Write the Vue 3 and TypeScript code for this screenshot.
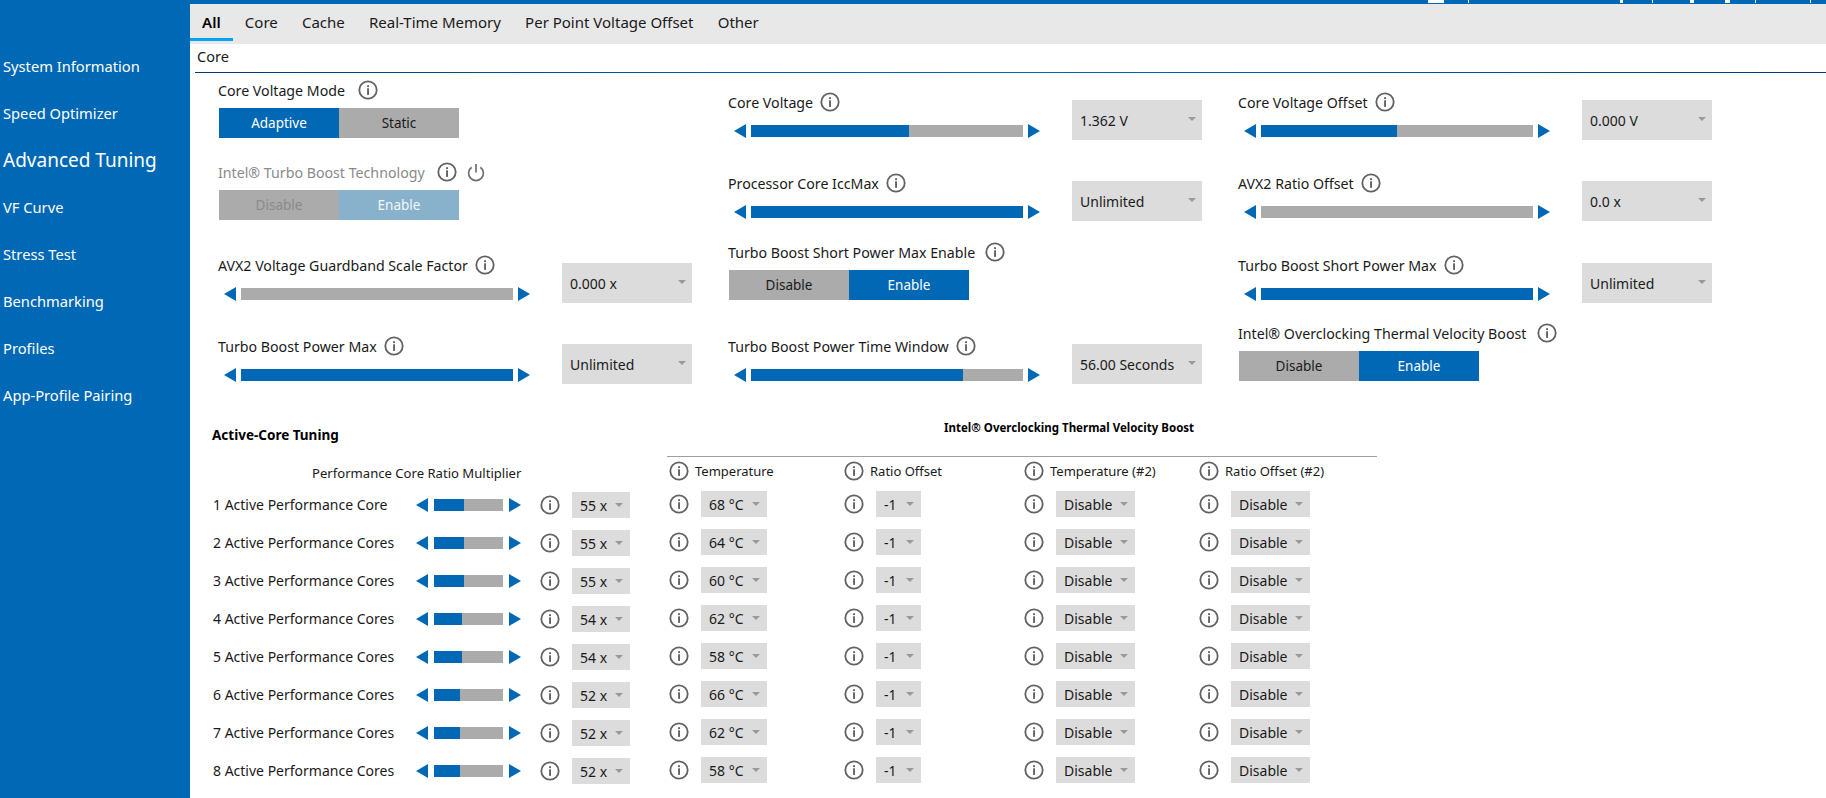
<script setup lang="ts">
interface Cell {
  kind: 'slider' | 'toggle'
  label: string
  top: number
  value?: string
  fill?: number
  on?: string
  off?: string
  dim?: boolean
  power?: boolean
  gap?: number
}

const navItems = [
  'System Information',
  'Speed Optimizer',
  'Advanced Tuning',
  'VF Curve',
  'Stress Test',
  'Benchmarking',
  'Profiles',
  'App-Profile Pairing'
]
const tabs = ['All', 'Core', 'Cache', 'Real-Time Memory', 'Per Point Voltage Offset', 'Other']

// bits of the window title that are cut off by the top edge
const titleTicks = [
  { x: 1428, w: 16 },
  { x: 1468, w: 1 },
  { x: 1620, w: 3 },
  { x: 1652, w: 1 },
  { x: 1690, w: 4 },
  { x: 1725, w: 5 },
  { x: 1755, w: 1 },
  { x: 1810, w: 1 }
]

const columns: Cell[][] = [
  [
    { kind: 'toggle', label: 'Core Voltage Mode', top: 7, on: 'Adaptive', off: 'Static', gap: 13 },
    { kind: 'toggle', label: 'Intel® Turbo Boost Technology', top: 24, on: 'Disable', off: 'Enable', dim: true, power: true, gap: 12 },
    { kind: 'slider', label: 'AVX2 Voltage Guardband Scale Factor', top: 35, value: '0.000 x', fill: 0 },
    { kind: 'slider', label: 'Turbo Boost Power Max', top: 33, value: 'Unlimited', fill: 100 }
  ],
  [
    { kind: 'slider', label: 'Core Voltage', top: 19, value: '1.362 V', fill: 58 },
    { kind: 'slider', label: 'Processor Core IccMax', top: 33, value: 'Unlimited', fill: 100 },
    { kind: 'toggle', label: 'Turbo Boost Short Power Max Enable', top: 21, off: 'Disable', on: 'Enable', gap: 10 },
    { kind: 'slider', label: 'Turbo Boost Power Time Window', top: 36, value: '56.00 Seconds', fill: 78 }
  ],
  [
    { kind: 'slider', label: 'Core Voltage Offset', top: 19, value: '0.000 V', fill: 50 },
    { kind: 'slider', label: 'AVX2 Ratio Offset', top: 33, value: '0.0 x', fill: 0 },
    { kind: 'slider', label: 'Turbo Boost Short Power Max', top: 34, value: 'Unlimited', fill: 100 },
    { kind: 'toggle', label: 'Intel® Overclocking Thermal Velocity Boost', top: 20, off: 'Disable', on: 'Enable', gap: 11 }
  ]
]

const coreRows = [
  { name: '1 Active Performance Core', ratio: '55 x', fill: 43, temp: '68 °C' },
  { name: '2 Active Performance Cores', ratio: '55 x', fill: 43, temp: '64 °C' },
  { name: '3 Active Performance Cores', ratio: '55 x', fill: 43, temp: '60 °C' },
  { name: '4 Active Performance Cores', ratio: '54 x', fill: 41, temp: '62 °C' },
  { name: '5 Active Performance Cores', ratio: '54 x', fill: 41, temp: '58 °C' },
  { name: '6 Active Performance Cores', ratio: '52 x', fill: 38, temp: '66 °C' },
  { name: '7 Active Performance Cores', ratio: '52 x', fill: 38, temp: '62 °C' },
  { name: '8 Active Performance Cores', ratio: '52 x', fill: 38, temp: '58 °C' }
]
const tvbHeads = ['Temperature', 'Ratio Offset', 'Temperature (#2)', 'Ratio Offset (#2)']
</script>

<template>
  <div class="app">
    <svg class="sprite" width="0" height="0">
      <symbol id="info" viewBox="0 0 20 20">
        <circle cx="10" cy="10" r="8.7" fill="none" stroke="#626262" stroke-width="1.8" />
        <rect x="9.1" y="5.2" width="1.9" height="1.9" fill="#626262" />
        <rect x="9.1" y="8.3" width="1.9" height="6.6" fill="#626262" />
      </symbol>
    </svg>

    <div class="topbar">
      <i v-for="t in titleTicks" :key="t.x" :style="{ left: t.x + 'px', width: t.w + 'px' }"></i>
    </div>

    <div class="body">
      <nav class="sidebar">
        <a v-for="item in navItems" :key="item" :class="{ current: item === 'Advanced Tuning' }">{{ item }}</a>
      </nav>

      <main class="main">
        <div class="tabs">
          <span v-for="tab in tabs" :key="tab" class="tab" :class="{ active: tab === 'All' }">{{ tab }}</span>
        </div>
        <div class="section-head">Core</div>

        <div class="cols">
          <div v-for="(col, i) in columns" :key="i" class="col">
            <div
              v-for="cell in col"
              :key="cell.label"
              class="cell"
              :class="{ dim: cell.dim }"
              :style="{ marginTop: cell.top + 'px' }"
            >
              <div class="cell-main">
                <div class="label" :style="{ gap: (cell.gap ?? 7) + 'px' }">
                  <span>{{ cell.label }}</span>
                  <svg class="info"><use href="#info" /></svg>
                  <svg v-if="cell.power" class="power" viewBox="0 0 20 20">
                    <path d="M5.6 5.2a7.4 7.4 0 1 0 8.8 0" fill="none" stroke="#707070" stroke-width="1.7" />
                    <path d="M10 2v8.4" fill="none" stroke="#707070" stroke-width="1.7" />
                  </svg>
                </div>
                <div v-if="cell.kind === 'slider'" class="slider">
                  <b class="arrow left"></b>
                  <div class="track"><div class="fill" :style="{ width: cell.fill + '%' }"></div></div>
                  <b class="arrow right"></b>
                </div>
                <div v-else class="toggle">
                  <template v-if="cell.on === 'Adaptive' || cell.dim">
                    <button class="seg" :class="{ selected: !cell.dim }">{{ cell.on }}</button>
                    <button class="seg" :class="{ selected: cell.dim }">{{ cell.off }}</button>
                  </template>
                  <template v-else>
                    <button class="seg">{{ cell.off }}</button>
                    <button class="seg selected">{{ cell.on }}</button>
                  </template>
                </div>
              </div>
              <div v-if="cell.kind === 'slider'" class="select big">
                <span>{{ cell.value }}</span><em class="caret"></em>
              </div>
            </div>
          </div>
        </div>

        <div class="tuning">
          <div class="active-core">
            <div class="tuning-title">Active-Core Tuning</div>
            <div class="ratio-head">Performance Core Ratio Multiplier</div>
            <div class="core-rows">
              <div v-for="row in coreRows" :key="row.name" class="core-row">
                <span class="core-name">{{ row.name }}</span>
                <div class="slider small">
                  <b class="arrow left"></b>
                  <div class="track"><div class="fill" :style="{ width: row.fill + '%' }"></div></div>
                  <b class="arrow right"></b>
                </div>
                <svg class="info core-info"><use href="#info" /></svg>
                <div class="select w58"><span>{{ row.ratio }}</span><em class="caret"></em></div>
              </div>
            </div>
          </div>

          <div class="tvb">
            <div class="tvb-title">Intel® Overclocking Thermal Velocity Boost</div>
            <div class="tvb-grid head">
              <template v-for="h in tvbHeads" :key="h">
                <svg class="info"><use href="#info" /></svg>
                <span class="head-text">{{ h }}</span>
              </template>
            </div>
            <div class="tvb-rows">
              <div v-for="row in coreRows" :key="row.name" class="tvb-grid">
                <svg class="info"><use href="#info" /></svg>
                <div class="select w66"><span>{{ row.temp }}</span><em class="caret"></em></div>
                <svg class="info"><use href="#info" /></svg>
                <div class="select w45"><span>-1</span><em class="caret"></em></div>
                <svg class="info"><use href="#info" /></svg>
                <div class="select w79"><span>Disable</span><em class="caret"></em></div>
                <svg class="info"><use href="#info" /></svg>
                <div class="select w79"><span>Disable</span><em class="caret"></em></div>
              </div>
            </div>
          </div>
        </div>
      </main>
    </div>
  </div>
</template>

<style>
html,
body {
  margin: 0;
  background: #fff;
  overflow: hidden;
}
</style>

<style scoped>
.app {
  position: relative;
  width: 1826px;
  height: 798px;
  overflow: hidden;
  font-family: 'Noto Sans', 'Open Sans', sans-serif;
  font-size: 14px;
  color: #1a1a1a;
}
.sprite {
  position: absolute;
}
.topbar {
  position: relative;
  height: 4px;
  background: #0068b5;
}
.topbar i {
  position: absolute;
  top: 0;
  height: 3px;
  background: #fff;
}
.body {
  display: flex;
  height: 794px;
}
.sidebar {
  width: 190px;
  flex: none;
  background: #0068b5;
  color: #fff;
  display: flex;
  flex-direction: column;
  padding: 39px 0 0 3px;
  box-sizing: border-box;
  font-size: 14.7px;
}
.sidebar a {
  height: 47px;
  line-height: 47px;
  white-space: nowrap;
}
.sidebar a.current {
  font-size: 19px;
}
.main {
  flex: 1;
  min-width: 0;
}
.tabs {
  height: 40px;
  background: #e8e8e8;
  display: flex;
  font-size: 15px;
}
.tab {
  position: relative;
  padding: 0 12.1px;
  line-height: 37px;
  white-space: nowrap;
}
.tab.active {
  font-weight: 600;
  color: #000;
}
.tab.active::after {
  content: '';
  position: absolute;
  left: 0;
  right: 0;
  top: 34px;
  height: 3px;
  background: #00a4ef;
}
.section-head {
  height: 29px;
  margin-left: 5px;
  padding-left: 2px;
  line-height: 25px;
  font-size: 14.5px;
  box-sizing: border-box;
  border-bottom: 1px solid;
  border-image: linear-gradient(90deg, #003c71, #0068b5 50%, #003c71) 1;
}
.cols {
  display: flex;
  height: 311px;
  padding-left: 28px;
}
.col {
  width: 510px;
  flex: none;
}
.cell {
  display: flex;
}
.cell-main {
  width: 344px;
  flex: none;
}
.label {
  height: 20px;
  display: flex;
  align-items: center;
  white-space: nowrap;
  font-size: 14.2px;
}
.info {
  width: 20px;
  height: 20px;
  flex: none;
}
.power {
  width: 20px;
  height: 20px;
  margin-left: -3px;
}
.dim .label {
  color: #8a8a8a;
}
.slider {
  display: flex;
  align-items: center;
  gap: 5px;
  margin: 12px 0 0 6px;
}
.arrow {
  width: 12px;
  height: 14px;
  flex: none;
  background: #0068b5;
}
.arrow.left {
  clip-path: polygon(100% 0, 100% 100%, 0 50%);
}
.arrow.right {
  clip-path: polygon(0 0, 100% 50%, 0 100%);
}
.track {
  width: 272px;
  height: 12px;
  background: #ababab;
}
.fill {
  height: 100%;
  background: #0068b5;
}
.toggle {
  display: flex;
  margin: 8px 0 0 1px;
}
.seg {
  width: 120px;
  height: 30px;
  padding: 0;
  border: 0;
  font: inherit;
  font-size: 13.5px;
  color: #1a1a1a;
  background: #ababab;
}
.seg.selected {
  background: #0068b5;
  color: #fff;
}
.dim .seg {
  color: #8a8a8a;
}
.dim .seg.selected {
  background: #88b2cb;
  color: #f2f6f9;
}
.select {
  position: relative;
  height: 26px;
  background: #dcdcdc;
  display: flex;
  align-items: center;
  padding-left: 8px;
  box-sizing: border-box;
  white-space: nowrap;
  justify-self: start;
}
.select.big {
  width: 130px;
  height: 40px;
  margin-top: 8px;
}
.caret {
  position: absolute;
  right: 7px;
  top: 11px;
  width: 8px;
  height: 4px;
  background: #999;
  clip-path: polygon(0 0, 100% 0, 50% 100%);
}
.big .caret {
  right: 6px;
  top: 17px;
}
.w58 {
  width: 58px;
}
.w66 {
  width: 66px;
}
.w45 {
  width: 45px;
}
.w79 {
  width: 79px;
}
.tuning {
  display: flex;
  padding-left: 23px;
}
.active-core {
  width: 454px;
  flex: none;
}
.tuning-title {
  margin: 41px 0 0 -1px;
  height: 20px;
  line-height: 20px;
  font-size: 13.5px;
  font-weight: 700;
  color: #000;
}
.ratio-head {
  margin: 18px 0 9px 99px;
  height: 20px;
  line-height: 20px;
  font-size: 13.1px;
}
.core-rows,
.tvb-rows {
  display: flex;
  flex-direction: column;
  gap: 12px;
}
.core-row {
  display: flex;
  align-items: center;
  height: 26px;
}
.core-name {
  width: 203px;
  flex: none;
  margin-top: -2px;
  font-size: 14px;
}
.slider.small {
  margin: 0;
  gap: 6px;
}
.small .track {
  width: 69px;
}
.core-info {
  margin: 0 12px 0 19px;
}
.tvb {
  width: 710px;
}
.tvb-title {
  margin-top: 34px;
  padding: 0 0 18px 277px;
  height: 20px;
  line-height: 20px;
  font-size: 11.5px;
  font-weight: 700;
  color: #000;
  border-bottom: 1px solid #a0a0a0;
}
.tvb-grid {
  display: grid;
  grid-template-columns: 32px 143px 32px 148px 32px 143px 32px 143px;
  align-items: center;
  height: 26px;
  padding-left: 2px;
}
.tvb-grid.head {
  height: 20px;
  margin: 4px 0 10px;
}
.head-text {
  margin-left: -6px;
  font-size: 13px;
  white-space: nowrap;
}
</style>
